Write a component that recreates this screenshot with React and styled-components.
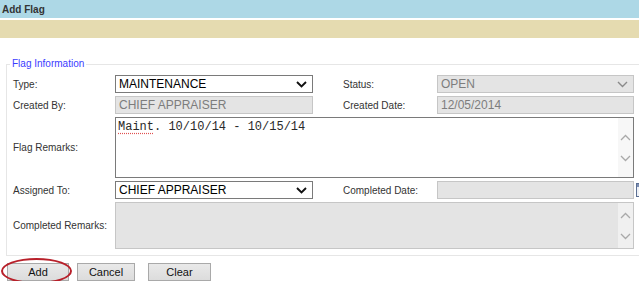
import React from 'react'
import styled, { createGlobalStyle } from 'styled-components'

const GlobalStyle = createGlobalStyle`
  html, body {
    margin: 0;
    padding: 0;
    background: #fff;
    overflow: hidden;
  }
  body {
    font-family: "Liberation Sans", Arial, sans-serif;
  }
`

export default function App() {
  return (
    <Page>
      <GlobalStyle />
      <TitleBar>Add Flag</TitleBar>
      <SubBar />
      <Section>
        <Legend>Flag Information</Legend>
        <FormGrid>
          <Label>Type:</Label>
          <Field>
            MAINTENANCE
            <Chevron />
          </Field>
          <Label $col={4}>Status:</Label>
          <Field $disabled>
            OPEN
            <Chevron $muted />
          </Field>

          <Label>Created By:</Label>
          <Field $disabled>CHIEF APPRAISER</Field>
          <Label $col={4}>Created Date:</Label>
          <Field $disabled>12/05/2014</Field>

          <Label>Flag Remarks:</Label>
          <TextBox>
            <TextBody>
              <Misspelt>Maint</Misspelt>. 10/10/14 - 10/15/14
            </TextBody>
            <Scroll />
          </TextBox>

          <Label>Assigned To:</Label>
          <Field>
            CHIEF APPRAISER
            <Chevron />
          </Field>
          <Label $col={4}>Completed Date:</Label>
          <DateCell>
            <Field $disabled />
            <CalendarIcon />
          </DateCell>

          <Label>Completed Remarks:</Label>
          <TextBox $disabled>
            <TextBody />
            <Scroll $disabled />
          </TextBox>
        </FormGrid>
      </Section>
      <ButtonRow>
        <Highlight />
        <Button $w={62}>Add</Button>
        <Button $w={58}>Cancel</Button>
        <Button $w={63} $ml={5}>Clear</Button>
      </ButtonRow>
    </Page>
  )
}

function Chevron({ $muted }) {
  return (
    <Arrow width="11" height="7" viewBox="0 0 11 7">
      <polyline
        points="1,1 5.5,5.5 10,1"
        fill="none"
        stroke={$muted ? '#8a8a8a' : '#111'}
        strokeWidth={$muted ? 1.4 : 1.9}
      />
    </Arrow>
  )
}

function Scroll({ $disabled }) {
  return (
    <ScrollStrip $disabled={$disabled}>
      <svg width="11" height="7" viewBox="0 0 11 7">
        <polyline points="1,6 5.5,1.5 10,6" fill="none" stroke="#a9a9a9" strokeWidth="1.3" />
      </svg>
      <svg width="11" height="7" viewBox="0 0 11 7">
        <polyline points="1,1 5.5,5.5 10,1" fill="none" stroke="#a9a9a9" strokeWidth="1.3" />
      </svg>
    </ScrollStrip>
  )
}

function CalendarIcon() {
  return (
    <CalSvg width="14" height="16" viewBox="0 0 14 16">
      <rect x="0.5" y="1.5" width="12" height="13" fill="#eef1f6" stroke="#5b6f93" />
      <rect x="1" y="2" width="11" height="3" fill="#7d8fb3" />
      <line x1="3" y1="8" x2="10" y2="8" stroke="#9aa6bd" />
      <line x1="3" y1="11" x2="10" y2="11" stroke="#9aa6bd" />
    </CalSvg>
  )
}

const Page = styled.div`
  width: 639px;
  overflow: hidden;
`

const TitleBar = styled.div`
  height: 18px;
  background: #add8e6;
  color: #333;
  font-size: 10px;
  font-weight: bold;
  line-height: 19px;
  padding-left: 2px;
`

const SubBar = styled.div`
  height: 18px;
  margin-top: 2px;
  background: #e5dbb0;
`

const Section = styled.fieldset`
  width: 660px;
  margin: 20px 0 0 6px;
  padding: 5px 0 6px 6px;
  border: 1px solid #e6e6e6;
  box-sizing: border-box;
  min-width: 0;
`

const Legend = styled.legend`
  color: #3b3bff;
  font-size: 10px;
  line-height: 12px;
  padding: 0 2px;
  margin-left: -3px;
`

const FormGrid = styled.div`
  display: grid;
  grid-template-columns: 102px 198px 30px 94px 197px;
  grid-template-rows: 18px 18px 61px 18px 47px;
  row-gap: 3px;
  & > :nth-child(9) {
    margin-bottom: 1px;
  }
`

const Label = styled.div`
  grid-column: ${p => p.$col || 1};
  align-self: center;
  font-size: 10px;
  color: #333;
  white-space: nowrap;
`

const Field = styled.div`
  position: relative;
  display: flex;
  align-items: center;
  height: 18px;
  width: 100%;
  box-sizing: border-box;
  padding: 0 3px;
  border: 1px solid ${p => (p.$disabled ? '#c6c6c6' : '#7a7a7a')};
  background: ${p => (p.$disabled ? '#e4e4e4' : '#fff')};
  color: ${p => (p.$disabled ? '#7d7d7d' : '#000')};
  font-size: 12px;
  white-space: nowrap;
`

const Arrow = styled.svg`
  position: absolute;
  right: 5px;
  top: 5px;
`

const TextBox = styled.div`
  grid-column: 2 / 6;
  display: flex;
  box-sizing: border-box;
  border: 1px solid ${p => (p.$disabled ? '#c6c6c6' : '#7a7a7a')};
  background: ${p => (p.$disabled ? '#e4e4e4' : '#fff')};
`

const TextBody = styled.div`
  flex: 1;
  padding: 2px 2px;
  font-family: "Liberation Mono", "Courier New", monospace;
  font-size: 12px;
  line-height: 14px;
  color: #2a2a2a;
`

const Misspelt = styled.span`
  text-decoration: underline dotted #e05050;
  text-underline-offset: 3px;
`

const ScrollStrip = styled.div`
  width: 15px;
  display: flex;
  flex-direction: column;
  align-items: center;
  justify-content: center;
  gap: 14px;
  background: ${p => (p.$disabled ? '#f0f0f0' : '#f7f7f7')};
`

const DateCell = styled.div`
  position: relative;
  display: flex;
`

const CalSvg = styled.svg`
  position: absolute;
  left: 199px;
  top: 1px;
`

const ButtonRow = styled.div`
  position: relative;
  display: flex;
  gap: 8px;
  margin: 7px 0 0 7px;
`

const Button = styled.button`
  width: ${p => p.$w}px;
  height: 18px;
  margin-left: ${p => p.$ml || 0}px;
  padding: 0;
  border: 1px solid #a9a9a9;
  background: linear-gradient(#e9e9e9, #dcdcdc);
  color: #111;
  font-family: "Liberation Sans", Arial, sans-serif;
  font-size: 11px;
  line-height: 16px;
`

const Highlight = styled.div`
  position: absolute;
  left: -6px;
  top: -5px;
  width: 71px;
  height: 26px;
  box-sizing: border-box;
  border: 2px solid #b8202a;
  border-radius: 50%;
  pointer-events: none;
`
